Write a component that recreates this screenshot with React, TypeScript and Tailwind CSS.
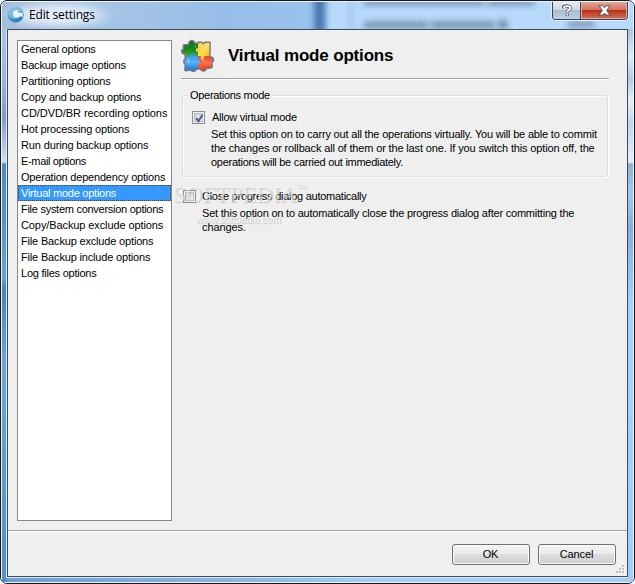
const options = [
  { label: "General options", spacing: "tracking-[-0.2px]" },
  { label: "Backup image options", spacing: "tracking-[-0.17px]" },
  { label: "Partitioning options", spacing: "tracking-[-0.2px]" },
  { label: "Copy and backup options", spacing: "tracking-[-0.17px]" },
  { label: "CD/DVD/BR recording options", spacing: "tracking-[-0.06px]" },
  { label: "Hot processing options", spacing: "tracking-[-0.16px]" },
  { label: "Run during backup options", spacing: "tracking-[-0.14px]" },
  { label: "E-mail options", spacing: "tracking-[-0.34px]" },
  { label: "Operation dependency options", spacing: "tracking-[-0.2px]" },
  { label: "Virtual mode options", spacing: "tracking-[-0.25px]" },
  { label: "File system conversion options", spacing: "tracking-[-0.27px]" },
  { label: "Copy/Backup exclude options", spacing: "tracking-[-0.1px]" },
  { label: "File Backup exclude options", spacing: "tracking-[-0.17px]" },
  { label: "File Backup include options", spacing: "tracking-[-0.17px]" },
  { label: "Log files options", spacing: "tracking-[-0.24px]" },
]

const selected = "Virtual mode options"

function AppIcon() {
  return (
    <svg width="17" height="17" viewBox="0 0 16 16" className="-ml-px">
      <defs>
        <linearGradient id="orb" x1="0" y1="0" x2="0.5" y2="1">
          <stop offset="0" stopColor="#b9d6ea" />
          <stop offset="0.5" stopColor="#69aedb" />
          <stop offset="1" stopColor="#2f86c6" />
        </linearGradient>
      </defs>
      <circle cx="8" cy="8" r="7.800" fill="url(#orb)" />
      <path d="M5.200 6.500C6 4 9 3 11 4.500l-1.300 1.300 5.200.9-.2 4-1.700-1.300C11.500 11.500 7.500 11.800 5.900 9.700z" fill="#e6f4fc" />
      <path d="M3.500 3.200C6.500.5 11.500.8 13.800 4L12 5.300C10 3 6.300 3.300 5.200 6.500c-.6 2.500 1.300 5 3.800 5.300C6 12.800 3 11 2.300 8.300c-.5-2 0-3.900 1.200-5.100z" fill="#86b9dc" />
      <path d="M2 9.500c2 3.500 7.500 4.700 11 .4l1.300 1.100C12 15.500 4.500 16 2 9.500z" fill="#2b84c6" />
    </svg>
  )
}

function PuzzleIcon() {
  return (
    <svg width="34" height="34" viewBox="0 0 34 34">
      <defs>
        <linearGradient id="green" x1="0" y1="0" x2="0" y2="1">
          <stop offset="0" stopColor="#1a6b1c" />
          <stop offset="0.6" stopColor="#1f8f1f" />
          <stop offset="1" stopColor="#4fae3a" />
        </linearGradient>
        <linearGradient id="yellow" x1="0" y1="0" x2="1" y2="1">
          <stop offset="0" stopColor="#f5c62c" />
          <stop offset="0.5" stopColor="#ffe05a" />
          <stop offset="1" stopColor="#f0b000" />
        </linearGradient>
        <linearGradient id="blue" x1="0" y1="0" x2="0" y2="1">
          <stop offset="0" stopColor="#2c92ee" />
          <stop offset="0.5" stopColor="#55b5fb" />
          <stop offset="1" stopColor="#1a70dc" />
        </linearGradient>
        <linearGradient id="red" x1="0" y1="0" x2="0" y2="1">
          <stop offset="0" stopColor="#e8452a" />
          <stop offset="0.5" stopColor="#ff7046" />
          <stop offset="1" stopColor="#dd3a1c" />
        </linearGradient>
      </defs>
      <path
        d="M3 6.500l5.500-.3C7.500 1.500 13 1 13 4.800L17 5l.3-1h3.200c.5 1.700 3 1.500 3.500 0h4.500l-.3 14.500c4-.5 5 3.500 1.800 4.500l.5 5-6 1c0 3-4 3-4.500 0l-5.500.5c0 2.500-4 3-4.500.5L4.500 31l.5-6c-2-.5-2-4.500 0-5l-.3-5.500C1 15 0 11 3 10.700z"
        fill="#686c7b"
        stroke="#747887"
        strokeWidth="2.800"
        strokeLinejoin="round"
      />
      <path d="M3 6.500l5.500-.3C7.500 1.500 13 1 13 4.800L17 5v4.200c-2.800-.7-2.800 4 0 3.300V17l-3.500.3c.3-3.300-4.300-3.300-4 0l-4.700.4-.1-3.200C1 15 0 11 3 10.700z" fill="url(#green)" />
      <path d="M17 4h3.500c.5 1.700 3 1.500 3.500 0h4.500l-.3 13-4.700.2c1 3.800-5 3.800-4-.2H17v-4.500c-2.800.7-2.800-4 0-3.300z" fill="url(#yellow)" />
      <path d="M4.800 17.700l4.700-.4c-.3-3.300 4.300-3.300 4 0L17 17v3.500c3.500-1 3.500 4.500 0 3.500v5.400l-2.500.1c0 2.500-4 3-4.500.5L4.500 31l.5-6c-2-.5-2-4.500 0-5z" fill="url(#blue)" />
      <path d="M17 17h2.500c-1 4 5 4 4 .2l4.700-.2v1.500c4-.5 5 3.500 1.800 4.500l.5 5-6 1c0 3-4 3-4.500 0l-3 .4V24c3.500 1 3.500-4.500 0-3.500z" fill="url(#red)" />
      <path d="M14.500 7.500V7M19 6.500h1.500M25 6l.5 3M7 20.500l.8 3M20 20l3 1.500" stroke="#fff" strokeOpacity="0.500" strokeWidth="1.200" strokeLinecap="round" />
    </svg>
  )
}

function HelpGlyph() {
  return (
    <svg width="10" height="13" viewBox="0 0 10 13" fill="none">
      <path d="M1 4.300C1 1.200 8.300 1.200 8.300 4c0 2-3 1.900-3 4M5.300 9.200v2.800" stroke="#535868" strokeWidth="3.400" />
      <path d="M2 4C2 1.500 8.300 1.500 8.300 4c0 2-3 1.900-3 3.800M5.300 9.800v1.700" stroke="#fff" strokeWidth="1.900" />
    </svg>
  )
}

function CloseGlyph() {
  return (
    <svg width="13" height="11" viewBox="0 0 13 11">
      <path d="M1 .8h3.600l1.900 2 1.900-2H12L8.600 5.400 12 10.100H8.400l-1.900-2-1.900 2H1l3.400-4.700z" fill="#fff" stroke="#535666" strokeWidth="1" />
    </svg>
  )
}

function Checkbox({ checked }: { checked?: boolean }) {
  return (
    <span className="grid h-[13px] w-[13px] shrink-0 place-items-center border border-[#8e8f8f] bg-[#f4f4f4]">
      <span className="grid h-[9px] w-[9px] place-items-center border border-[#b5bac0] bg-linear-to-br from-[#cbd0d6] to-[#f5f6f7]">
        {checked && (
          <svg width="9" height="9" viewBox="0 0 9 9" className="shrink-0">
            <path d="M1.200 4.200l2.300 3L7.500.8" fill="none" stroke="#4a5f97" strokeWidth="2" />
          </svg>
        )}
      </span>
    </span>
  )
}

function DialogButton({ label }: { label: string }) {
  return (
    <button className="h-[21px] w-[78px] rounded-[3px] border border-[#707070] bg-[linear-gradient(#f2f2f2,#ebebeb_50%,#dddddd_50%,#cfcfcf)] pr-px pb-[2px] tracking-[-0.15px] shadow-[inset_0_0_0_1px_#fbfbfb]">
      {label}
    </button>
  )
}

function Grip() {
  return (
    <svg width="9" height="9" viewBox="0 0 9 9">
      {[[6, 0], [3, 3], [6, 3], [0, 6], [3, 6], [6, 6]].map(([x, y]) => (
        <g key={`${x}-${y}`}>
          <rect x={x + 1} y={y + 1} width="2" height="2" fill="#fff" />
          <rect x={x} y={y} width="2" height="2" fill="#bdbdbd" />
        </g>
      ))}
    </svg>
  )
}

function TitleBar() {
  return (
    <div className="relative flex h-[27px] items-start overflow-hidden rounded-t-[5px]">
      {/* blurred window behind the glass */}
      <svg className="absolute inset-0" width="631" height="27" viewBox="2 2 631 27">
        <defs>
          <filter id="soft" filterUnits="userSpaceOnUse" x="-20" y="-30" width="700" height="100">
            <feGaussianBlur stdDeviation="3" />
          </filter>
          <filter id="glow" filterUnits="userSpaceOnUse" x="-20" y="-30" width="300" height="100">
            <feGaussianBlur stdDeviation="9 5" />
          </filter>
          <linearGradient id="glass" x1="0" x2="1" y1="0" y2="0">
            <stop offset="0" stopColor="#a3bcda" />
            <stop offset="0.2" stopColor="#a3c4e6" />
            <stop offset="0.35" stopColor="#97bee8" />
            <stop offset="0.5" stopColor="#99c2ed" />
          </linearGradient>
        </defs>
        <rect x="0" y="0" width="635" height="30" fill="url(#glass)" />
        <ellipse cx="58" cy="15" rx="46" ry="11" fill="#f1f7fd" opacity="0.850" filter="url(#glow)" />
        <rect x="325" y="-16" width="340" height="64" fill="#b7d9fb" filter="url(#soft)" />
        <rect x="314" y="-16" width="11" height="64" fill="#4677ae" filter="url(#soft)" />
        <rect x="350" y="-16" width="2" height="64" fill="#7fa4cb" filter="url(#soft)" opacity="0.800" />
        <g filter="url(#soft)" fill="#5f7690" opacity="0.850">
          <rect x="364" y="0" width="120" height="5" />
          <rect x="488" y="0" width="46" height="5" />
          <rect x="364" y="22" width="64" height="6" />
          <rect x="431" y="22" width="64" height="6" />
          <rect x="499" y="20" width="8" height="9" />
          <rect x="568" y="22" width="26" height="5" />
        </g>
      </svg>
      <div className="relative flex flex-1 items-center gap-[5px] pt-[4px] pl-[6px]">
        <AppIcon />
        <span className="font-['Open_Sans',sans-serif] text-[12px] leading-4 tracking-[-0.18px]">Edit settings</span>
      </div>
      <div className="relative mr-[5px] flex h-[18px] overflow-hidden rounded-b-[4px] border border-t-0 border-[#3c4654] shadow-[0_0_0_1px_#e3f0fb]">
        <div className="grid w-[28px] place-items-center border-r border-[#5a3c42] bg-[linear-gradient(#e3ebf4,#ccd8e5_50%,#a9bccf_50%,#bdd2e8)]">
          <HelpGlyph />
        </div>
        <div className="grid w-[46px] place-items-center bg-[linear-gradient(#e5a494,#cf6f5d_50%,#ba3018_50%,#d2705b)] shadow-[inset_0_0_0_1px_#e4a99f]">
          <CloseGlyph />
        </div>
      </div>
    </div>
  )
}

export default function App() {
  return (
    <div className="h-[584px] w-[635px] bg-white font-['Liberation_Sans',Arial,sans-serif] text-[11px] leading-[14px] text-black">
      <div className="flex h-full flex-col rounded-[7px] border border-[#16191f] bg-[#e9f4fd]">
        <div className="flex h-full flex-col rounded-[6px] border border-[#e9f4fd] bg-[linear-gradient(to_right,#6f9fd0,#8fb8e2_40%,#a8d0f5_60%,#a5cdf3)]">
          <TitleBar />
          <div className="flex flex-1">
            <div className="w-[5px] bg-[linear-gradient(#a9c2df,#9fb9d8_8%,#7f9dc2_16%,#d0deee_24%,#5585bb_24.5%,#6f9ecf_45%,#4f82ba_47%,#74a3d4_60%,#5c8cc0)]" />
            <div className="mb-[5px] flex w-[621px] flex-col border border-[#3d4c5c] bg-[#efefef] shadow-[0_0_0_1px_#d7e9fa]">
              <div className="flex h-[500px]">
                <ul className="mt-[10px] ml-[9px] h-[481px] w-[155px] shrink-0 border border-[#828790] bg-white">
                  {options.map(({ label, spacing }) => (
                    <li
                      key={label}
                      className={`h-4 pl-[3px] leading-4 whitespace-nowrap ${spacing} ${
                        label === selected ? "bg-[#3399ff] text-white outline-1 -outline-offset-1 outline-dotted outline-[#6b3b05]" : ""
                      }`}
                    >
                      {label}
                    </li>
                  ))}
                </ul>

                <div className="ml-[9px] flex w-[428px] flex-col">
                  <div className="flex h-[49px] shrink-0 items-center gap-[13px] border-b border-[#a0a0a0] pt-[3px] shadow-[0_1px_0_#fff]">
                    <PuzzleIcon />
                    <h1 className="pt-px text-[17px] leading-5 font-bold tracking-[-0.17px]">Virtual mode options</h1>
                  </div>

                  <fieldset className="relative mt-[16px] ml-px h-[82px] w-[426px] min-w-0 rounded-[3px] border border-[#d5dfe5] shadow-[1px_1px_0_#fff,inset_1px_1px_0_#fff]">
                    <div className="absolute -top-[8px] left-[5px] bg-[#efefef] px-[2px] tracking-[-0.3px]">Operations mode</div>
                    <div className="mt-[14px] ml-[9px] flex items-center gap-[7px]">
                      <Checkbox checked />
                      <span className="tracking-[-0.25px]">Allow virtual mode</span>
                    </div>
                    <div className="mt-[3px] ml-[28px] whitespace-nowrap">
                      <p className="tracking-[-0.185px]">
                        Set this option on to carry out all the operations virtually. You will be able to commit
                      </p>
                      <p className="tracking-[-0.15px]">
                        the changes or rollback all of them or the last one. If you switch this option off, the
                      </p>
                      <p className="tracking-[-0.28px]">operations will be carried out immediately.</p>
                    </div>
                  </fieldset>

                  <div className="relative">
                    <div className="mt-[12px] ml-[2px] flex items-center gap-[6px]">
                      <Checkbox />
                      <span className="tracking-[-0.26px]">Close progress dialog automatically</span>
                    </div>
                    <div className="mt-[3px] ml-[21px] whitespace-nowrap">
                      <p className="tracking-[-0.21px]">
                        Set this option on to automatically close the progress dialog after committing the
                      </p>
                      <p className="tracking-[-0.1px]">changes.</p>
                    </div>
                    {/* watermark */}
                    <div className="absolute top-[7px] -left-[8px] flex items-start font-['Liberation_Serif',serif] text-[23px] leading-[22px] whitespace-nowrap text-white/50 [text-shadow:1px_1px_1px_#9998]">
                      <span>SOFTPEDIA</span>
                      <span className="text-[6px] leading-[5px]">TM</span>
                    </div>
                    <div className="absolute top-[36px] left-[15px] text-[10px] tracking-[-0.1px] whitespace-nowrap text-white/60 [text-shadow:1px_1px_1px_#9998]">
                      www.softpedia.com
                    </div>
                  </div>
                </div>
              </div>

              <div className="relative flex flex-1 items-start justify-end gap-[8px] border-t border-[#a0a0a0] pt-[13px] pr-[11px] shadow-[inset_0_1px_0_#fff]">
                <DialogButton label="OK" />
                <DialogButton label="Cancel" />
                <div className="absolute right-[2px] bottom-[2px]">
                  <Grip />
                </div>
              </div>
            </div>
            <div className="w-[5px] bg-[linear-gradient(#a9c3df,#e0ebf6_5%,#b4cbe2_9%,#e6eff8_13%,#c3d4e6_17%,#e6eff8_24%,#8fb0d6_24.5%,#a5c9ee_30%,#8aaed6_36%,#a9d0f7_50%,#a5cdf5)]" />
          </div>
        </div>
      </div>
    </div>
  )
}
